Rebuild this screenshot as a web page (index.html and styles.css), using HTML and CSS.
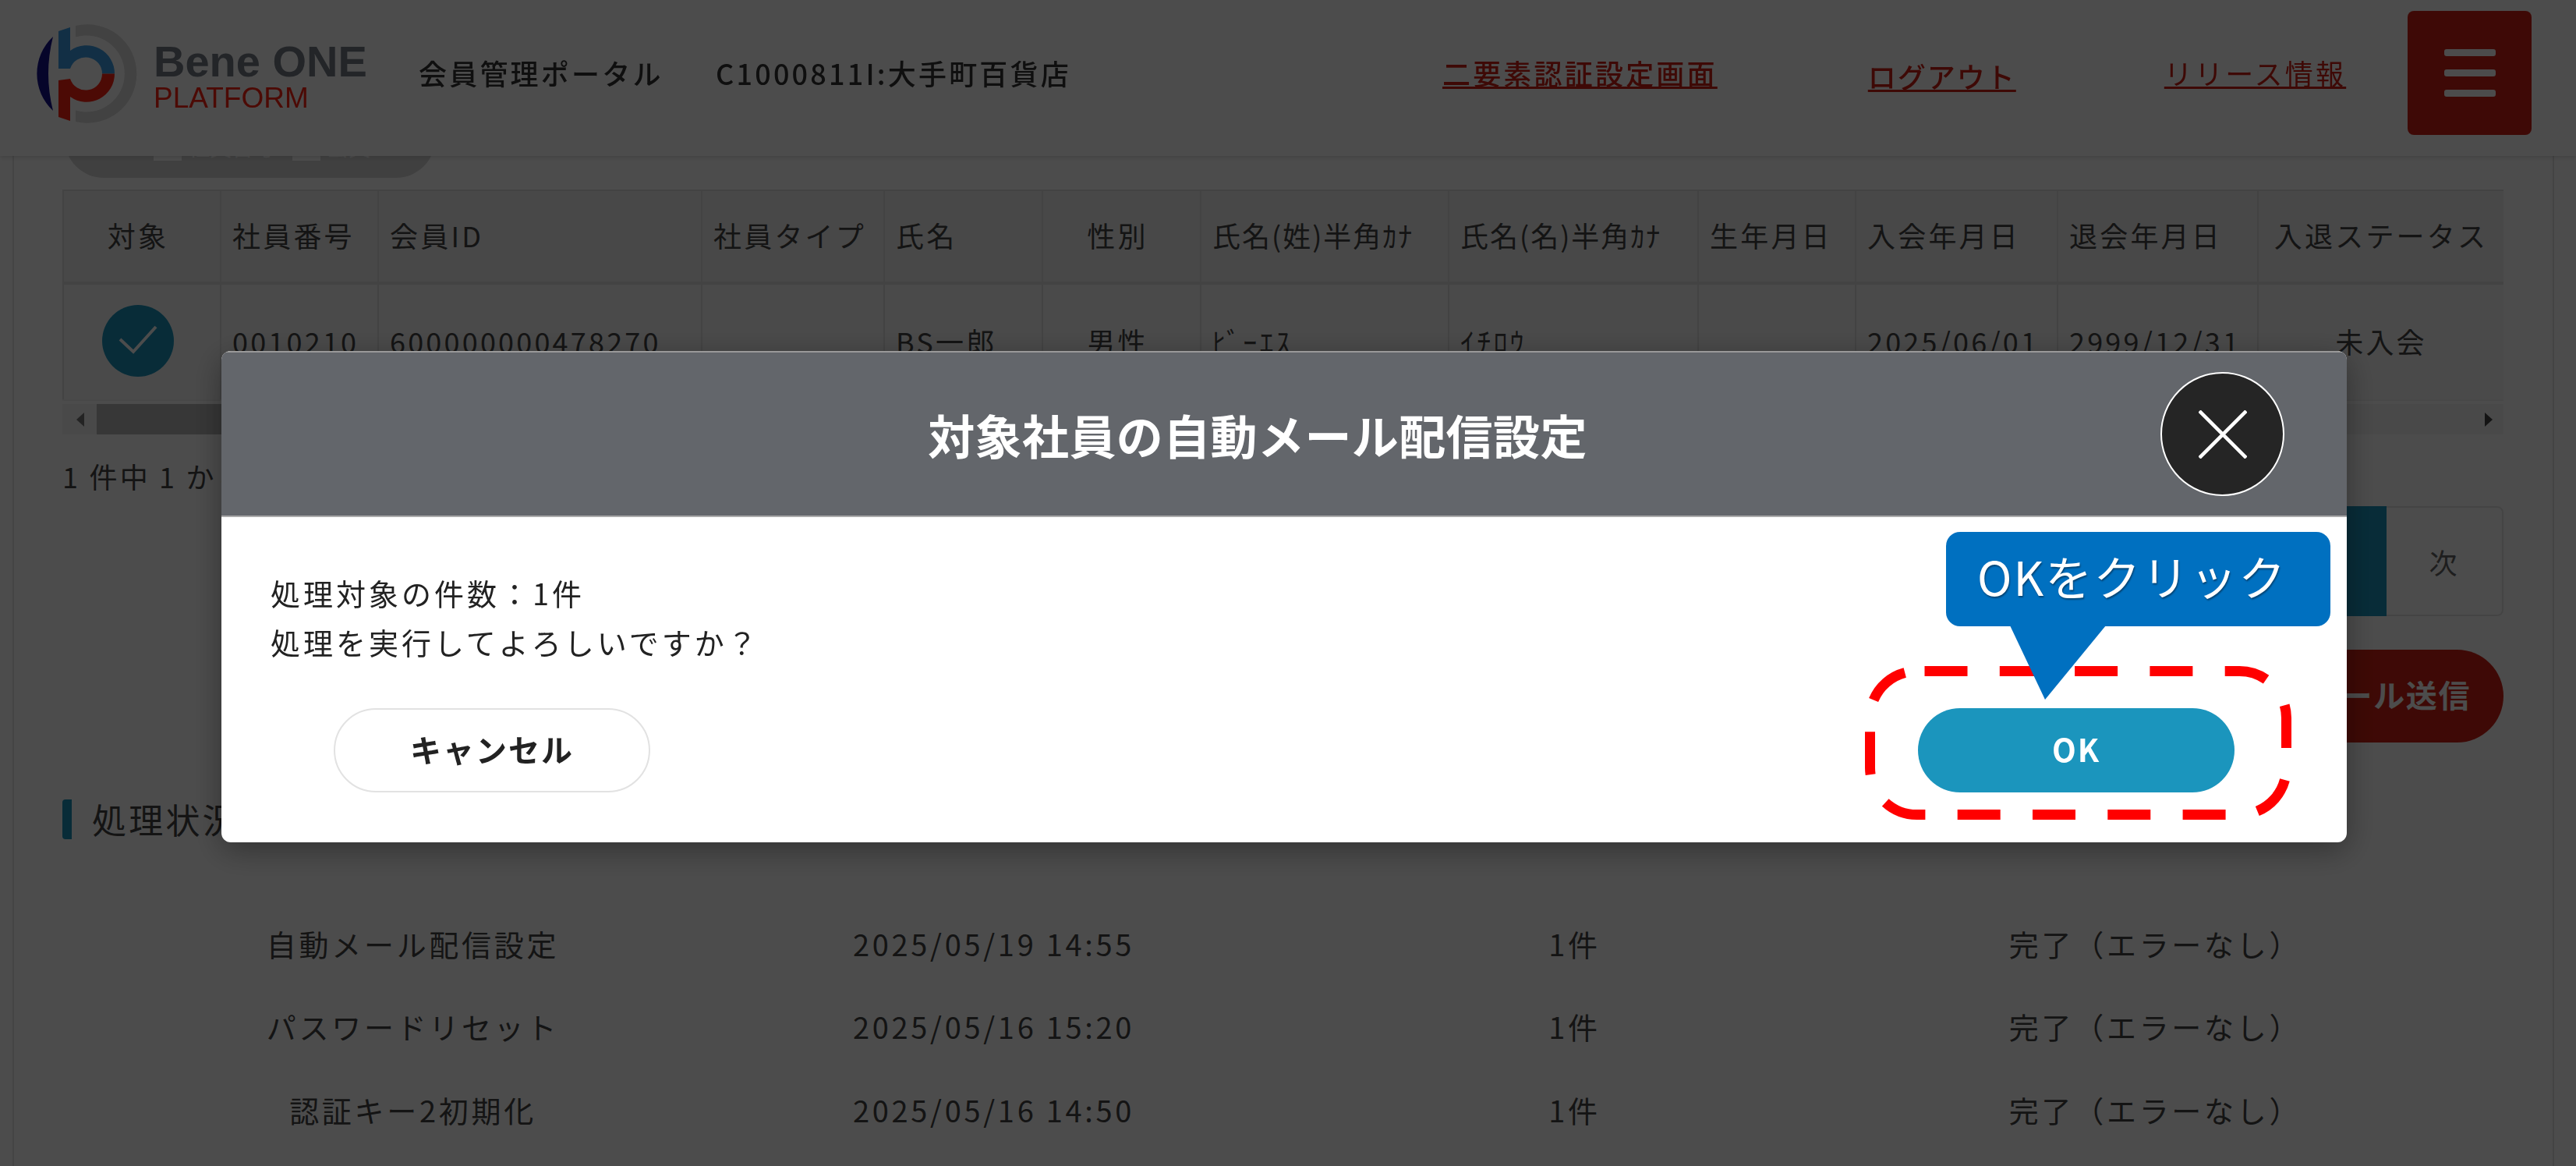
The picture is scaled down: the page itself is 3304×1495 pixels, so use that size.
FILE: index.html
```html
<!doctype html>
<html lang="ja">
  <head>
    <meta charset="UTF-8" />
    <title>会員管理ポータル</title>
    <link rel="stylesheet" href="styles.css">
  </head>
  <body>
    <header class="site-header">
      <div class="logo">
        <svg class="logo-mark" viewBox="46 30 130 130" width="130" height="130">
          <path d="M97 33 A63.3 63.3 0 1 1 97 156 L97 141.500 A49 49 0 1 0 97 47.500 Z" fill="#dcdcdc" />
          <path d="M68 47 A65 65 0 0 0 68 142 Q56 94.500 68 47 Z" fill="#17118c" />
          <path d="M75 40 L90 35 L90 65 A36 36 0 0 1 147 94.500 L131 94.500 A21 21 0 0 0 90 88 L75 88 Z" fill="#3d9fe6" />
          <path d="M75 103 L90 101 A21 21 0 0 0 131 94.500 L147 94.500 A36 36 0 0 1 90 124 L90 155 L75 150 Z" fill="#ff2213" />
        </svg>
        <div class="logo-text">
          <div class="logo-name">Bene ONE</div>
          <div class="logo-sub">PLATFORM</div>
        </div>
      </div>
      <div class="portal-name">会員管理ポータル</div>
      <div class="company-name">C1000811I:大手町百貨店</div>
      <nav class="header-nav">
        <a href="#" class="nav-link nav-link-two">二要素認証設定画面</a>
        <a href="#" class="nav-link nav-link-logout">ログアウト</a>
        <a href="#" class="nav-link nav-link-release">リリース情報</a>
      </nav>
      <button class="menu-button" aria-label="menu"><span></span><span></span><span></span></button>
    </header>

    <main class="page-container">
      <div class="filter-pill"><i></i><b>社員番号</b><i></i><b>会員ID</b></div>

      <table class="member-table">
        <colgroup>
          <col style="width: 202px" /><col style="width: 202px" /><col style="width: 415px" />
          <col style="width: 234px" /><col style="width: 203px" /><col style="width: 203px" />
          <col style="width: 318px" /><col style="width: 320px" /><col style="width: 202px" />
          <col style="width: 259px" /><col style="width: 257px" /><col style="width: 315px" />
        </colgroup>
        <thead>
          <tr>
            <th class="center shift">対象</th><th>社員番号</th><th>会員ID</th><th>社員タイプ</th><th>氏名</th>
            <th class="center shift">性別</th><th class="kana">氏名(姓)半角ｶﾅ</th><th class="kana">氏名(名)半角ｶﾅ</th><th>生年月日</th>
            <th>入会年月日</th><th>退会年月日</th><th class="center">入退ステータス</th>
          </tr>
        </thead>
        <tbody>
          <tr>
            <td class="center shift">
              <span class="check-mark">
                <svg viewBox="0 0 92 92" width="92" height="92"><path d="M23 44 L40 60 L69 28" fill="none" stroke="#fff" stroke-width="4" /></svg>
              </span>
            </td>
            <td>0010210</td><td>600000000478270</td><td></td><td>BS一郎</td><td class="center shift">男性</td>
            <td>ﾋﾞｰｴｽ</td><td>ｲﾁﾛｳ</td><td></td><td>2025/06/01</td><td>2999/12/31</td><td class="center">未入会</td>
          </tr>
        </tbody>
      </table>
      <div class="table-scroll">
        <span class="arrow-left"></span>
        <span class="scroll-thumb"></span>
        <span class="arrow-right"></span>
      </div>

      <p class="result-count">1 件中 1 から 1 まで表示</p>

      <div class="pagination">
        <span class="page-item">前</span>
        <span class="page-item page-current">1</span>
        <span class="page-item">次</span>
      </div>

      <div class="send-row">
        <button class="send-button">パスワードリセットメール送信</button>
      </div>

      <h2 class="section-title">処理状況</h2>
      <div class="status-list">
        <span>自動メール配信設定</span><span>2025/05/19 14:55</span><span>1件</span><span>完了（エラーなし）</span>
        <span>パスワードリセット</span><span>2025/05/16 15:20</span><span>1件</span><span>完了（エラーなし）</span>
        <span>認証キー2初期化</span><span>2025/05/16 14:50</span><span>1件</span><span>完了（エラーなし）</span>
      </div>
    </main>

    <div class="overlay"></div>

    <section class="modal">
      <div class="modal-header">
        <h1 class="modal-title">対象社員の自動メール配信設定</h1>
        <button class="modal-close" aria-label="close">
          <svg viewBox="0 0 62 62" width="62" height="62"><path d="M1 1 L61 61 M61 1 L1 61" stroke="#fff" stroke-width="4.500" fill="none" /></svg>
        </button>
      </div>
      <div class="modal-body">
        <p class="modal-text">処理対象の件数：1件<br />処理を実行してよろしいですか？</p>
        <div class="modal-actions">
          <button class="btn btn-cancel">キャンセル</button>
          <button class="btn btn-ok">OK</button>
        </div>
      </div>
    </section>

    <!-- annotation on top of the screenshot -->
    <svg class="dash-box" width="560" height="210" viewBox="0 0 560 210">
      <rect x="6.500" y="6.500" width="534" height="184" rx="60" fill="none" stroke="#ff0000" stroke-width="13" stroke-dasharray="55 41.300" stroke-dashoffset="-10" />
    </svg>
    <div class="callout">OKをクリック</div>
    <svg class="callout-tail" width="124" height="96" viewBox="0 0 124 96"><path d="M0 0 L123 0 L45 95 Z" fill="#0070c0" /></svg>
  </body>
</html>
```

FILE: styles.css
```css
* {
  margin: 0;
  padding: 0;
  box-sizing: border-box;
}

html,
body {
  height: 100%;
  overflow: hidden;
}

body {
  font-family: "Noto Sans CJK JP", "Noto Sans", sans-serif;
  font-size: 36px;
  letter-spacing: 3.2px;
  color: #444;
  background: #fff;
}

.site-header {
  position: fixed;
  top: 0;
  left: 0;
  width: 100%;
  height: 200px;
  display: flex;
  align-items: center;
  background: #fff;
  box-shadow: 0 2px 6px rgba(0, 0, 0, 0.15);
  padding-left: 46px;
  z-index: 10;
}

.logo {
  display: flex;
  align-items: center;
  gap: 21px;
  width: 491px;
  margin-top: -10px;
}

.logo-text {
  font-family: "Liberation Sans", Arial, sans-serif;
  letter-spacing: 0;
  margin-top: 4px;
}

.logo-name {
  font-size: 56px;
  line-height: 58px;
  font-weight: 700;
  color: #757c88;
}

.logo-sub {
  font-size: 37px;
  line-height: 36px;
  color: #ff2213;
}

.portal-name {
  font-weight: 500;
  color: #333;
  width: 381px;
  margin-top: -14px;
}

.company-name {
  font-weight: 500;
  color: #333;
  margin-top: -14px;
}

.header-nav {
  display: flex;
  align-items: center;
  margin-left: 476px;
}

.nav-link {
  color: #cf2114;
  margin-top: -14px;
}

.nav-link-two {
  font-weight: 500;
  margin-right: 193px;
}

.nav-link-logout {
  font-weight: 500;
  letter-spacing: 2px;
  margin-right: 190px;
  margin-top: -6px;
}

.menu-button {
  position: absolute;
  top: 14px;
  right: 57px;
  width: 159px;
  height: 159px;
  border: none;
  border-radius: 8px;
  background: #cf2114;
  display: flex;
  flex-direction: column;
  align-items: center;
  justify-content: center;
  gap: 17px;
}

.menu-button span {
  width: 66px;
  height: 9px;
  border-radius: 3px;
  background: #fff;
}

.page-container {
  margin: 0 28px 0 16px;
  height: 1495px;
  padding: 130px 63px 0 62px;
  border-left: 2px solid #e4e4e4;
  border-right: 2px solid #e4e4e4;
}

.filter-pill {
  width: 475px;
  height: 98px;
  margin-left: 3px;
  margin-bottom: 15px;
  padding: 40px 0 0 114px;
  border-radius: 0 0 50px 50px;
  background: #d6d6d6;
  display: flex;
  align-items: flex-start;
  gap: 8px;
  font-size: 28px;
  overflow: hidden;
}

.filter-pill i {
  flex: none;
  width: 36px;
  height: 18px;
  margin-top: 18px;
  background: #fff;
}

.filter-pill b {
  flex: none;
  width: 126px;
  line-height: 36px;
  font-weight: 400;
  letter-spacing: 0;
  color: #fff;
  white-space: nowrap;
}

.member-table {
  width: 3130px;
  table-layout: fixed;
  border-collapse: collapse;
}

.member-table th,
.member-table td {
  border: 2px solid #e2e2e2;
  font-weight: 400;
  text-align: left;
  padding: 0 14px 4px;
  white-space: nowrap;
  overflow: hidden;
}

.member-table th {
  height: 119px;
  background: #f0f0f0;
  border-bottom-width: 4px;
  border-right: none;
}

.member-table td {
  height: 150px;
  background: #f8f8f8;
  border-right: none;
  border-bottom-color: #f0f0f0;
}

.member-table .center {
  text-align: center;
}

.member-table .shift {
  padding: 0 18px 4px 8px;
}

.member-table .kana {
  letter-spacing: 2px;
}

.check-mark {
  display: inline-flex;
  width: 92px;
  height: 92px;
  vertical-align: middle;
  border-radius: 50%;
  background: #1b95bd;
}

.table-scroll {
  height: 39px;
  margin-top: 4px;
  background: #f4f4f4;
  display: flex;
  align-items: center;
  position: relative;
}

.arrow-left,
.arrow-right {
  width: 0;
  height: 0;
  border-top: 9px solid transparent;
  border-bottom: 9px solid transparent;
}

.arrow-left {
  margin-left: 18px;
  border-right: 10px solid #777;
}

.arrow-right {
  margin-left: auto;
  margin-right: 14px;
  border-left: 10px solid #444;
}

.scroll-thumb {
  width: 2600px;
  height: 39px;
  background: #b8b8b8;
  position: absolute;
  left: 44px;
}

.result-count {
  margin-top: 26px;
  line-height: 54px;
  white-space: nowrap;
}

.pagination {
  margin-top: 12px;
  display: flex;
  justify-content: flex-end;
  height: 141px;
}

.page-item {
  width: 150px;
  display: flex;
  align-items: center;
  justify-content: center;
  border: 2px solid #e4e4e4;
  border-left: none;
  color: #666;
}

.page-item:last-child {
  border-radius: 0 8px 8px 0;
}

.page-current {
  background: #1b95bd;
  border-color: #1b95bd;
  color: #fff;
}

.send-row {
  margin-top: 43px;
  display: flex;
  justify-content: flex-end;
}

.send-button {
  height: 119px;
  width: 900px;
  padding: 0 42px 6px 0;
  border: none;
  border-radius: 60px;
  background: #cf2114;
  color: #fff;
  font-family: inherit;
  font-size: 40px;
  letter-spacing: 1.600px;
  font-weight: 700;
  text-align: right;
  white-space: nowrap;
}

.section-title {
  margin-top: 73px;
  padding-left: 26px;
  border-left: 12px solid #1b95bd;
  border-radius: 4px;
  height: 51px;
  line-height: 51px;
  font-size: 44px;
  font-weight: 400;
}

.status-list {
  margin-top: 80px;
  margin-left: 77px;
  display: grid;
  grid-template-columns: repeat(4, 745px);
  grid-auto-rows: 106.500px;
  align-items: center;
  justify-items: center;
  font-size: 38px;
  letter-spacing: 3.700px;
}

.overlay {
  position: fixed;
  inset: 0;
  background: rgba(0, 0, 0, 0.7);
  z-index: 20;
}

.modal {
  position: fixed;
  top: 450px;
  left: 284px;
  width: 2726px;
  height: 630px;
  border-radius: 12px;
  overflow: hidden;
  background: #fff;
  box-shadow: 0 10px 40px rgba(0, 0, 0, 0.35);
  z-index: 30;
}

.modal-header {
  height: 213px;
  padding-right: 68px;
  background: #63666b;
  display: flex;
  align-items: center;
  justify-content: center;
  border-top: 2px solid #999;
  border-bottom: 2px solid #aaa;
  position: relative;
}

.modal-title {
  font-size: 60px;
  font-weight: 700;
  letter-spacing: 0.400px;
  color: #fff;
}

.modal-close {
  position: absolute;
  top: 25px;
  right: 80px;
  width: 159px;
  height: 159px;
  border: 2px solid #fff;
  border-radius: 50%;
  background: #252525;
  display: flex;
  align-items: center;
  justify-content: center;
}

.modal-body {
  padding: 65px 144px 0;
}

.modal-text {
  font-size: 38px;
  letter-spacing: 4px;
  line-height: 63px;
  color: #222;
  margin-left: -81px;
}

.modal-actions {
  display: flex;
  justify-content: space-between;
  margin-top: 54px;
}

.btn {
  width: 406px;
  height: 108px;
  padding-bottom: 4px;
  border-radius: 54px;
  font-family: inherit;
  font-size: 40px;
  font-weight: 700;
  letter-spacing: 2px;
}

.btn-cancel {
  background: #fff;
  border: 2px solid #e2e2e2;
  color: #222;
}

.btn-ok {
  background: #1b95bd;
  border: none;
  color: #fff;
}

.dash-box {
  position: fixed;
  top: 854px;
  left: 2392px;
  z-index: 40;
}

.callout {
  position: fixed;
  top: 682px;
  left: 2496px;
  width: 493px;
  height: 121px;
  padding-left: 40px;
  border-radius: 18px;
  background: #0070c0;
  color: #fff;
  font-size: 60px;
  line-height: 112px;
  font-weight: 400;
  letter-spacing: 2px;
  text-shadow: 1px 2px 2px rgba(0, 0, 0, 0.4);
  white-space: nowrap;
  z-index: 41;
}

.callout-tail {
  position: fixed;
  top: 802px;
  left: 2578px;
  z-index: 41;
}
```
